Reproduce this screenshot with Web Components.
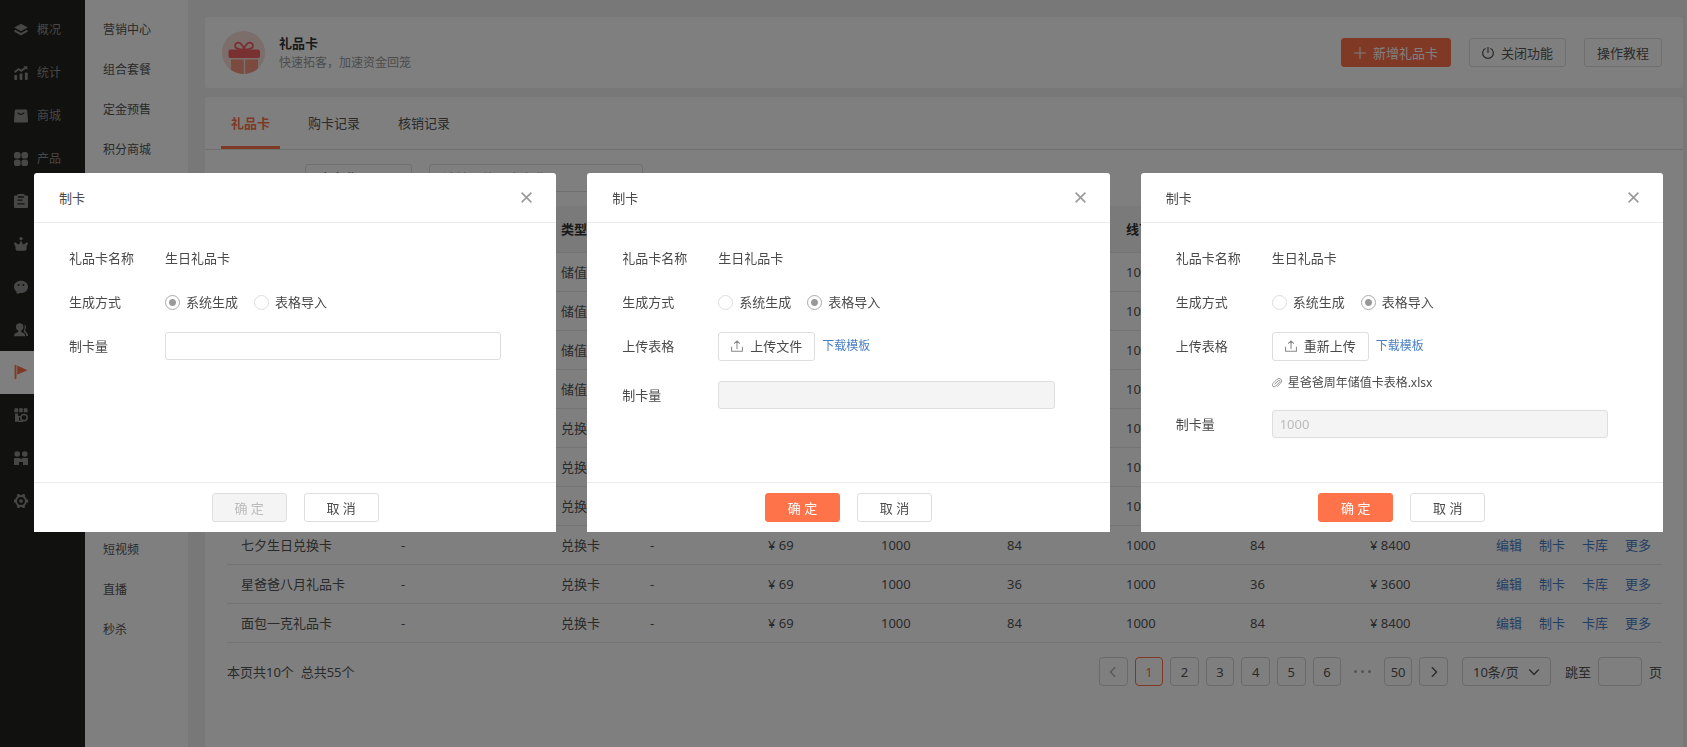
<!DOCTYPE html>
<html lang="zh-CN">
<head>
<meta charset="utf-8">
<title>礼品卡 - 制卡</title>
<style>
html, body { margin: 0; height: 100%; }
body {
  font-family: "Noto Sans", "Noto Sans CJK SC", sans-serif;
  font-size: 13px; line-height: 20px; color: #4a4a4a; background: #f0f0f0;
  --accent: #ff734a; --line: #dedede; --link: #4a7fc6; --text: #4a4a4a;
}
</style>
</head>
<body>
<gift-app></gift-app>
<dialog-layer>
  <card-dialog mode="system" confirm="disabled"></card-dialog>
  <card-dialog mode="import" upload="上传文件"></card-dialog>
  <card-dialog mode="import" upload="重新上传" file="星爸爸周年储值卡表格.xlsx" amount="1000"></card-dialog>
</dialog-layer>

<script>
const svg = (size, body) =>
  `<svg width="${size}" height="${size}" viewBox="0 0 14 14" fill="currentColor" aria-hidden="true">${body}</svg>`;
const stroke = 'style="fill:none;stroke:currentColor;stroke-width:1.200"';

const ICONS = {
  layers: '<path d="M7 .8 13.800 4.500 7 8.200 .2 4.500Z"/><path d="M.6 7.600 7 11.200l6.400-3.600" fill="none" stroke="currentColor" stroke-width="2.200"/>',
  stats: '<path d="M.6 6.200 4.600 3l2.600 1.800 4.600-3.300" fill="none" stroke="currentColor" stroke-width="1.800"/><path d="M9.500.3h3.800v3.600z"/><rect x=".3" y="9" width="2.800" height="5" rx="1"/><rect x="5.600" y="7.500" width="2.800" height="6.500" rx="1"/><rect x="10.900" y="6.500" width="2.800" height="7.500" rx="1"/>',
  bag: '<path d="M2 .5h10a1.200 1.200 0 0 1 1.200 1L14 12a1.500 1.500 0 0 1-1.500 1.600h-11A1.500 1.500 0 0 1 0 12L.8 1.500A1.200 1.200 0 0 1 2 .5Z"/><path d="M3.800 3.600Q7 7.200 10.200 3.600" fill="none" stroke="#22221e" stroke-width="1.300"/>',
  clover: '<rect width="6.600" height="6.600" rx="2.600"/><rect x="7.400" width="6.600" height="6.600" rx="2.600"/><rect y="7.400" width="6.600" height="6.600" rx="2.600"/><rect x="7.400" y="7.400" width="6.600" height="6.600" rx="2.600"/>',
  order: '<path d="M3.500 0h7v1.500H13q1 0 1 1V13q0 1-1 1H1q-1 0-1-1V2.500q0-1 1-1h2.500z"/><path d="M4 3h6M3.500 6.200h5M3.500 9.800h7" stroke="#22221e" stroke-width="1.300"/>',
  crown: '<circle cx="7" cy="1.700" r="1.600"/><path d="M7 3.500 9 7.500Q11.500 7 12.300 5.200L14 6Q13.500 8 12.500 9.500V12q0 1.700-1.700 1.700H3.200Q1.500 13.700 1.500 12V9.500Q.5 8 0 6l1.700-.8Q2.500 7 5 7.500Z"/>',
  face: '<path d="M7 .8c4 0 7 2.400 7 6 0 3.300-2.600 6-6 6.200L7 13c-1.300 0-2.500.7-4.600.4l.2-1.700C1 10.500 0 9 0 6.800 0 3.200 3 .8 7 .8Z"/><circle cx="4.600" cy="5" r="1" fill="#22221e"/><circle cx="9.400" cy="5" r="1" fill="#22221e"/>',
  users: '<circle cx="5.700" cy="4" r="3.700"/><path d="M4.200 7h3v2Q11.300 10 11.300 13.300H0Q0 10 4.200 9Z"/><path d="M10.500 1.500Q13 3.200 11.300 6.500 10.800 7.500 11.600 8.500 14 9.700 14 13h-1.600Q12 10.200 10 9 9.200 8 10.300 6.500 11 4 10.500 1.500Z"/>',
  flag: '<rect x=".6" y="0" width="1.800" height="14"/><path d="M3.200.4 13.400 5.200 3.200 9.800Z"/>',
  shop: '<path d="M.7.3h3.500v4H.2zM5.200.3h3.600v4H5.200zM9.800.3h3.500l.5 4h-4zM1 5.500h3V8h2.500L5 10v3.700H1z"/><circle cx="10" cy="9.600" r="3.200" fill="none" stroke="currentColor" stroke-width="1.500"/><path d="M5 12.500h4v1.500H5z"/>',
  pair: '<circle cx="3.200" cy="3" r="2.800"/><circle cx="10.800" cy="3" r="2.800"/><path d="M1 7h4.500L7 8.200 8.500 7H13q1 0 1 1v6H9v-3H5v3H0V8q0-1 1-1Z"/>',
  gear: '<circle cx="7" cy="7" r="4.900" fill="none" stroke="currentColor" stroke-width="2"/><g stroke="currentColor" stroke-width="2.800"><path d="M4 .2 5 2.500M10 .2 9 2.500M4 13.800 5 11.500M10 13.800 9 11.500M0 7h2M12 7h2"/></g><circle cx="7" cy="7" r="1.800"/>',
  plus: '<path d="M7 0v14M0 7h14" fill="none" stroke="currentColor" stroke-width="1.200"/>',
  power: '<path d="M4.200 1.500a6.200 6.200 0 1 0 5.600 0M7 0v7" fill="none" stroke="currentColor" stroke-width="1.400"/>',
  close: '<path d="m.8.8 12.400 12.400M13.200.8.8 13.200" fill="none" stroke="currentColor" stroke-width="2"/>',
  upload: `<path d="M.7 8v5h12.600V8M7 10.500V1M3.700 4.200 7 1l3.300 3.200" ${stroke}/>`,
  clip: `<path d="m3.700 8.800 5-5.100a1.400 1.400 0 0 1 2 2l-6 6.100A2.700 2.700 0 0 1 .9 8L7.200 1.700a3.600 3.600 0 0 1 5.200 5.100L7 12.300" ${stroke}/>`,
  prev: '<path d="M9.500 1.500 4 7l5.500 5.500" fill="none" stroke="currentColor" stroke-width="1.400"/>',
  next: '<path d="M4.500 1.500 10 7l-5.500 5.500" fill="none" stroke="currentColor" stroke-width="1.600"/>',
  down: '<path d="M1.500 4 7 10l5.500-6" fill="none" stroke="currentColor" stroke-width="1.600"/>'
};

/* Every component renders its markup from a template into an open root. */
class Base extends HTMLElement {
  connectedCallback() {
    if (this.shadowRoot) return;
    const t = document.createElement('template');
    t.innerHTML = this.render();
    this.attachShadow({ mode: 'open' }).append(t.content.cloneNode(true));
  }
}
const define = (name, render) =>
  customElements.define(name, class extends Base { render() { return render(this); } });

define('ui-icon', el => `
<style>:host{display:inline-flex;flex:none} svg{display:block}</style>
${svg(el.getAttribute('size') || 14, ICONS[el.getAttribute('name')])}`);

define('ui-button', el => `
<style>
:host{display:inline-flex;flex:none}
button{flex:1;height:29px;box-sizing:border-box;display:flex;align-items:center;justify-content:center;gap:7px;
  padding:0 12px;border:1px solid var(--line);border-radius:3px;background:#fff;color:var(--text);font:inherit;white-space:nowrap}
:host([kind=primary]) button{background:var(--accent);border-color:var(--accent);color:#fff}
button:disabled{background:#f4f4f4;color:#bbb}
</style>
<button type="button" ${el.hasAttribute('disabled') ? 'disabled' : ''}><slot></slot></button>`);

define('gift-app', () => `
<style>
:host{display:flex;min-height:100vh;color:#555;--text:#555}
main{flex:1;min-width:0;display:flex;flex-direction:column;gap:9px;padding:17px 4px 0 17px}
</style>
<side-nav></side-nav><sub-nav></sub-nav>
<main><page-head></page-head><gift-panel></gift-panel></main>`);

/* Entries without a label show their icon only. */
const NAV = [['layers','概况'],['stats','统计'],['bag','商城'],['clover','产品'],['order'],['crown'],
  ['face'],['users'],['flag'],['shop'],['pair'],['gear']];
define('side-nav', () => `
<style>
:host{display:block;flex:none;width:85px;background:#22221e;color:#8f8f8f;font-size:12px}
nav{display:grid;grid-auto-rows:1fr;height:513px;padding-top:9px}
a{display:flex;align-items:center;gap:9px;padding-left:14px;color:inherit;text-decoration:none}
a.on{background:#fff;color:var(--accent)}
</style>
<nav aria-label="主导航">${NAV.map(([i, t = '']) => `<a href="#" ${i === 'flag' ? 'class="on"' : ''}><ui-icon name="${i}"></ui-icon>${t}</a>`).join('')}</nav>`);

const SUB = ['营销中心','组合套餐','定金预售','积分商城','','','','','','','','','','短视频','直播','秒杀'];
define('sub-nav', () => `
<style>
:host{display:block;flex:none;width:103px;background:#fff;font-size:12px}
nav{padding-top:10px}
a{display:flex;align-items:center;height:40px;padding-left:18px;color:inherit;text-decoration:none}
</style>
<nav aria-label="营销">${SUB.map(t => `<a href="#">${t}</a>`).join('')}</nav>`);

define('page-head', () => `
<style>
:host{display:flex;align-items:center;gap:14px;height:71px;padding:0 21px 0 17px;background:#fff;border-radius:3px}
h1{margin:0;font-size:13px;line-height:20px;color:#333}
p{margin:0;font-size:12px;line-height:20px;color:#999}
.text{flex:1}
.actions{display:flex;gap:18px}
svg{display:block;flex:none}
</style>
<svg width="43" height="43" viewBox="0 0 43 43" aria-hidden="true">
  <defs><clipPath id="disc"><circle cx="21.500" cy="21.500" r="21.500"/></clipPath></defs>
  <circle cx="21.500" cy="21.500" r="21.500" fill="#f6dcd7"/>
  <g clip-path="url(#disc)">
    <path d="M9 28.500h12.800V43H9zM23.200 28.500h12.800V43H23.200z" fill="#f6967f"/>
  </g>
  <rect x="6.500" y="18.500" width="31.500" height="8.500" rx="2" fill="#f26163"/>
  <path d="M22 18.500C16 18.500 13 17.500 13 14.800c0-3 3.500-4 5.500-2.300C20.500 14 21.500 16 22 18.500 22.500 16 23.500 14 25.500 12.500c2-1.700 5.500-.7 5.500 2.300 0 2.700-3 3.700-9 3.700Z" fill="none" stroke="#f26163" stroke-width="1.800"/>
</svg>
<div class="text"><h1>礼品卡</h1><p>快速拓客，加速资金回笼</p></div>
<div class="actions">
  <ui-button kind="primary"><ui-icon name="plus" size="12"></ui-icon>新增礼品卡</ui-button>
  <ui-button><ui-icon name="power" size="12"></ui-icon>关闭功能</ui-button>
  <ui-button>操作教程</ui-button>
</div>`);

define('gift-panel', () => `
<style>
:host{display:block;flex:1;background:#fff;border-radius:3px 3px 0 0}
.tabs{display:flex;gap:18px;height:52px;padding-left:16px;border-bottom:1px solid var(--line)}
.tabs a{display:flex;align-items:center;padding:3px 10px 0;color:inherit;text-decoration:none;border-bottom:3px solid transparent}
.tabs a.on{color:var(--accent);font-weight:700;border-color:var(--accent)}
.content{padding:14px 21px 0 22px}
.filters{display:flex;gap:17px;padding-left:78px;margin-bottom:14px}
select,input{box-sizing:border-box;height:28px;border:1px solid var(--line);border-radius:3px;background:#fff;font:inherit;color:inherit;padding:0 13px}
input::placeholder{color:#aaa}
.filters select{width:107px;appearance:none}.filters input{width:214px}
</style>
<div class="tabs"><a class="on" href="#">礼品卡</a><a href="#">购卡记录</a><a href="#">核销记录</a></div>
<div class="content">
  <div class="filters"><select aria-label="搜索类型"><option>卡名称</option></select><input aria-label="关键字" placeholder="请输入礼品卡名称"></div>
  <gift-table></gift-table>
  <page-bar></page-bar>
</div>`);

const COLS = [160,160,89,118,113,126,119,124,120,126,180];
const HEAD = ['','','类型','','','','','线下','','',''];
const row = (name, kind, sold) => [name, '-', kind, '-', '¥ 69', '1000', sold, '1000', sold, `¥ ${sold}00`];
const partial = kind => ['', '', kind, '', '', '', '', '1000', '', ''];
const ROWS = [
  ...Array(4).fill(partial('储值卡')), ...Array(3).fill(partial('兑换卡')),
  row('七夕生日兑换卡', '兑换卡', '84'), row('星爸爸八月礼品卡', '兑换卡', '36'), row('面包一克礼品卡', '兑换卡', '84')];
const OPS = '<div><a href="#">编辑</a><a href="#">制卡</a><a href="#">卡库</a><a href="#">更多</a></div>';
define('gift-table', () => `
<style>
:host{display:block}
table{width:100%;table-layout:fixed;border-collapse:separate;border-spacing:0}
th,td{box-sizing:border-box;height:39px;padding:0 0 0 14px;text-align:left;white-space:nowrap;border-bottom:1px solid #e8e8e8}
th{height:47px;background:#f5f5f5;color:#333}
td div{display:flex;gap:17px}
a{color:var(--link);text-decoration:none}
</style>
<table>
<colgroup>${COLS.map(w => `<col style="width:${w}px">`).join('')}</colgroup>
<thead><tr>${HEAD.map(h => `<th scope="col">${h}</th>`).join('')}</tr></thead>
<tbody>${ROWS.map(r => `<tr>${r.map(c => `<td>${c}</td>`).join('')}<td>${r[0] ? OPS : ''}</td></tr>`).join('')}</tbody>
</table>`);

define('page-bar', () => `
<style>
:host{display:flex;align-items:center;margin-top:14px}
.sum{flex:1;white-space:pre}
.pages{display:grid;grid-template-columns:repeat(10,1fr);gap:7px;width:349px}
button,.pick,input{box-sizing:border-box;height:29px;border:1px solid #d4d4d4;border-radius:4px;background:none;font:inherit;color:inherit;padding:0}
button{display:flex;align-items:center;justify-content:center}
button.on{color:var(--accent);border-color:var(--accent)}
button:disabled{color:#aaa}
.dots{display:flex;align-items:center;justify-content:center;gap:4px}
.dots i{width:3px;height:3px;border-radius:50%;background:#aaa}
.pick{display:flex;align-items:center;width:89px;margin:0 14px;padding:0 10px}
select{flex:1;min-width:0;border:0;padding:0;background:none;appearance:none;font:inherit;color:inherit}
label{display:flex;align-items:center;gap:7px}
input{width:44px}
</style>
<span class="sum">本页共10个  总共55个</span>
<div class="pages">
  <button type="button" disabled aria-label="上一页"><ui-icon name="prev" size="12"></ui-icon></button>
  <button type="button" class="on">1</button>${[2,3,4,5,6].map(n => `<button type="button">${n}</button>`).join('')}
  <span class="dots"><i></i><i></i><i></i></span>
  <button type="button">50</button>
  <button type="button" aria-label="下一页"><ui-icon name="next" size="12"></ui-icon></button>
</div>
<span class="pick"><select aria-label="每页条数"><option>10条/页</option></select><ui-icon name="down" size="12"></ui-icon></span>
<label>跳至<input type="text">页</label>`);

define('dialog-layer', () => `
<style>
:host{position:fixed;inset:0;display:grid;grid-template-columns:repeat(3,1fr);align-items:start;gap:31px;
  padding:173px 24px 0 34px;background:rgba(0,0,0,.5)}
</style><slot></slot>`);

define('card-dialog', el => {
  const imported = el.getAttribute('mode') === 'import';
  const file = el.getAttribute('file');
  return `
<style>
:host{display:flex;flex-direction:column;min-height:359px;background:#fff;border-radius:3px 3px 0 0}
header{display:flex;align-items:center;justify-content:space-between;height:49px;padding:0 24px 0 25px;border-bottom:1px solid #ebebeb}
h2{margin:0;font-size:13px;font-weight:400}
.close{display:flex;padding:0;border:0;background:none;color:#999}
form{flex:1;display:flex;flex-direction:column;gap:16px;padding:21px 55px 0 35px}
.row{display:grid;grid-template-columns:96px 1fr;align-items:start}
.row>*{min-height:28px}
.row>label:first-child,.row>span:first-child,.value{display:flex;align-items:center;height:28px}
.radios{gap:16px}
.radios label{display:flex;align-items:center;gap:6px}
input[type=radio]{appearance:none;box-sizing:border-box;width:15px;height:15px;margin:0;border:1px solid #ddd;border-radius:50%;background:#fff}
input[type=radio]:checked{border-color:#aaa;background:radial-gradient(circle,#999 3px,#fff 4px)}
input[type=text]{box-sizing:border-box;width:100%;height:28px;padding:0 7px;border:1px solid var(--line);border-radius:3px;background:#fff;font:inherit;color:inherit}
input[type=text]:disabled{background:#f4f4f4;color:#bbb}
.upload{min-height:33px}
.upload .value{gap:7px}
.upload ui-button ui-icon{color:#888}
a{color:var(--link);font-size:12px;text-decoration:none}
.file{display:flex;align-items:center;gap:6px;margin-top:12px;font-size:12px;line-height:22px}
.file ui-icon{color:#888}
footer{display:flex;align-items:center;justify-content:center;gap:17px;height:49px;border-top:1px solid #ebebeb}
footer ui-button{width:75px}
</style>
<header><h2>制卡</h2><button class="close" type="button" aria-label="关闭"><ui-icon name="close" size="11"></ui-icon></button></header>
<form>
  <div class="row"><span>礼品卡名称</span><span class="value">生日礼品卡</span></div>
  <div class="row"><span>生成方式</span><div class="value radios">
    <label><input type="radio" name="mode" ${imported ? '' : 'checked'}>系统生成</label>
    <label><input type="radio" name="mode" ${imported ? 'checked' : ''}>表格导入</label></div></div>
  ${imported ? `<div class="row"><span>上传表格</span><div class="upload">
    <div class="value"><ui-button><ui-icon name="upload" size="12"></ui-icon>${el.getAttribute('upload')}</ui-button><a href="#">下载模板</a></div>
    ${file ? `<div class="file"><ui-icon name="clip" size="10"></ui-icon>${file}</div>` : ''}</div></div>` : ''}
  <div class="row"><label for="amount">制卡量</label><input id="amount" type="text" value="${el.getAttribute('amount') || ''}" ${imported ? 'disabled' : ''}></div>
</form>
<footer><ui-button ${el.getAttribute('confirm') === 'disabled' ? 'disabled' : 'kind="primary"'}>确 定</ui-button><ui-button>取 消</ui-button></footer>`;
});
</script>
</body>
</html>
